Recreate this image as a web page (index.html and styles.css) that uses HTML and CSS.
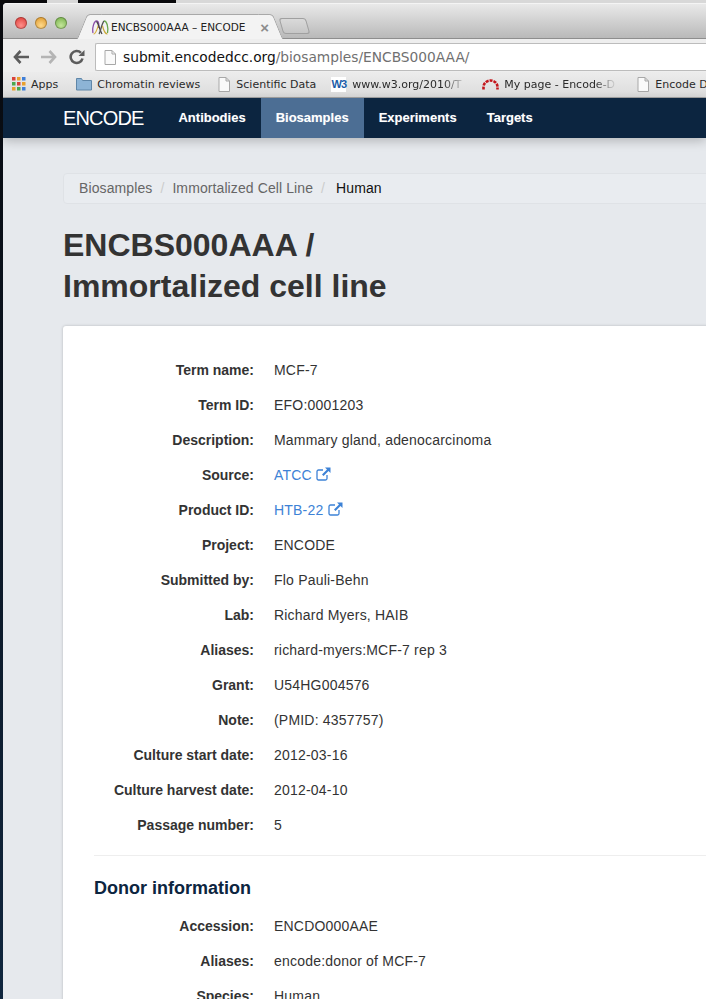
FILE: index.html
```html
<!DOCTYPE html>
<html>
<head>
    <title>ENCBS000AAA – ENCODE</title>
    <link rel="stylesheet" href="styles.css">
</head>
<body>
    <div class="desk-top">
        <span class="desk-dark desk-a"></span>
        <span class="desk-light desk-b"></span>
        <span class="desk-dark desk-c"></span>
        <span class="desk-light desk-d"></span>
    </div>
    <div class="window">
        <div class="tabbar">
            <div class="lights">
                <span class="light light-red"></span>
                <span class="light light-yellow"></span>
                <span class="light light-green"></span>
            </div>
            <div class="tab">
                <svg class="favicon" width="17" height="15" viewBox="0 0 17 15">
                    <path d="M1 13C0 8 2 1 4.500 1S7 5 6.500 8" fill="none" stroke="#8a4fa8" stroke-width="1.300"/>
                    <path d="M1.500 14C4 14 5 9 6.500 5" fill="none" stroke="#d8b040" stroke-width="1.200"/>
                    <path d="M4.500 1.500C6.500 3 8 11 10 14" fill="none" stroke="#444" stroke-width="1.300"/>
                    <path d="M7 14C8.500 12 9.500 4 12 1" fill="none" stroke="#555" stroke-width="1.300"/>
                    <path d="M12 1c3 0 4.500 6 3.500 12" fill="none" stroke="#6aa84e" stroke-width="1.300"/>
                    <path d="M10.500 6c1 4 2.500 8 5 8" fill="none" stroke="#c9a83a" stroke-width="1.200"/>
                </svg>
                <span class="tab-title">ENCBS000AAA – ENCODE</span>
                <span class="tab-close">×</span>
            </div>
            <div class="new-tab"></div>
        </div>
        <div class="toolbar">
            <svg class="nav-icon" width="16" height="16" viewBox="0 0 16 16">
                <path d="M7.500 2L2 8l5.500 6M3 8h13" fill="none" stroke="#5c5c5c" stroke-width="2.600"/>
            </svg>
            <svg class="nav-icon" width="16" height="16" viewBox="0 0 16 16">
                <path d="M8.500 2L14 8l-5.500 6M13 8H0" fill="none" stroke="#b4b4b4" stroke-width="2.600"/>
            </svg>
            <svg class="nav-icon" width="16" height="16" viewBox="0 0 16 16">
                <path d="M13.500 9.500A6 6 0 1 1 12 3.800" fill="none" stroke="#5c5c5c" stroke-width="2.600"/>
                <path d="M9.500 7h6V1z" fill="#5c5c5c"/>
            </svg>
            <div class="omnibox">
                <svg class="doc-icon" width="12" height="15" viewBox="0 0 12 15">
                    <path d="M1 .5h7l3.500 3.500v10.500H1zM8 .5V4h3.500" fill="#fafafa" stroke="#a8a8a8"/>
                </svg>
                <span class="url"><b>submit.encodedcc.org</b>/biosamples/ENCBS000AAA/</span>
            </div>
        </div>
        <div class="bookmarks">
            <span class="bookmark bm-apps">
                <svg width="14" height="14" viewBox="0 0 14 14">
                    <rect x="0" y="0" width="3.500" height="3.500" fill="#d9423a"/>
                    <rect x="5" y="0" width="3.500" height="3.500" fill="#e8a02e"/>
                    <rect x="10" y="0" width="3.500" height="3.500" fill="#3f7fd8"/>
                    <rect x="0" y="5" width="3.500" height="3.500" fill="#4aa84e"/>
                    <rect x="5" y="5" width="3.500" height="3.500" fill="#d9423a"/>
                    <rect x="10" y="5" width="3.500" height="3.500" fill="#e8a02e"/>
                    <rect x="0" y="10" width="3.500" height="3.500" fill="#e8a02e"/>
                    <rect x="5" y="10" width="3.500" height="3.500" fill="#4aa84e"/>
                    <rect x="10" y="10" width="3.500" height="3.500" fill="#3f7fd8"/>
                </svg>
                Apps
            </span>
            <span class="bookmark bm-folder">
                <svg width="16" height="14" viewBox="0 0 16 14">
                    <path d="M.5 13V1.500h5l1 2h9V13z" fill="#8db4d6" stroke="#5f86a8"/>
                </svg>
                Chromatin reviews
            </span>
            <span class="bookmark bm-sci">
                <svg width="12" height="15" viewBox="0 0 12 15">
                    <path d="M1 .5h7l3.500 3.500v10.500H1zM8 .5V4h3.500" fill="#fafafa" stroke="#a8a8a8"/>
                </svg>
                Scientific Data
            </span>
            <span class="bookmark bm-w3">
                <span class="w3-badge">W3</span>
                <span class="fade fade-w3">www.w3.org/2010/T</span>
            </span>
            <span class="bookmark bm-page">
                <svg width="17" height="11" viewBox="0 0 17 11">
                    <path d="M1.500 10.500V8A7 6.500 0 0 1 15.500 8v2.500" fill="none" stroke="#c4161c" stroke-width="2.600" stroke-dasharray="3 1"/>
                </svg>
                <span class="fade fade-page">My page - Encode-D</span>
            </span>
            <span class="bookmark bm-last">
                <svg width="12" height="15" viewBox="0 0 12 15">
                    <path d="M1 .5h7l3.500 3.500v10.500H1zM8 .5V4h3.500" fill="#fafafa" stroke="#a8a8a8"/>
                </svg>
                <span class="last-text">Encode D</span>
            </span>
        </div>
        <nav class="navbar">
            <a class="brand">ENCODE</a>
            <a class="nav-link">Antibodies</a>
            <a class="nav-link active">Biosamples</a>
            <a class="nav-link">Experiments</a>
            <a class="nav-link">Targets</a>
        </nav>
        <div class="content">
            <ol class="breadcrumb">
                <li>Biosamples</li>
                <li class="sep">/</li>
                <li>Immortalized Cell Line</li>
                <li class="sep">/</li>
                <li class="current">Human</li>
            </ol>
            <h1>ENCBS000AAA /<br>Immortalized cell line</h1>
            <div class="panel">
                <dl class="key-value">
                    <dt>Term name:</dt><dd>MCF-7</dd>
                    <dt>Term ID:</dt><dd>EFO:0001203</dd>
                    <dt>Description:</dt><dd>Mammary gland, adenocarcinoma</dd>
                    <dt>Source:</dt>
                    <dd><a class="ext">ATCC
                        <svg width="15" height="14" viewBox="0 0 15 14"><path d="M11 8v3.500a1.500 1.500 0 0 1-1.500 1.500h-7A1.500 1.500 0 0 1 1 11.500v-7A1.500 1.500 0 0 1 2.500 3H7" fill="none" stroke="#3d82d6" stroke-width="1.300"/><path d="M9 .5h5.500V6l-2-2L7.500 9 6 7.500l5-5z" fill="#3d82d6"/></svg>
                    </a></dd>
                    <dt>Product ID:</dt>
                    <dd><a class="ext">HTB-22
                        <svg width="15" height="14" viewBox="0 0 15 14"><path d="M11 8v3.500a1.500 1.500 0 0 1-1.500 1.500h-7A1.500 1.500 0 0 1 1 11.500v-7A1.500 1.500 0 0 1 2.500 3H7" fill="none" stroke="#3d82d6" stroke-width="1.300"/><path d="M9 .5h5.500V6l-2-2L7.500 9 6 7.500l5-5z" fill="#3d82d6"/></svg>
                    </a></dd>
                    <dt>Project:</dt><dd>ENCODE</dd>
                    <dt>Submitted by:</dt><dd>Flo Pauli-Behn</dd>
                    <dt>Lab:</dt><dd>Richard Myers, HAIB</dd>
                    <dt>Aliases:</dt><dd>richard-myers:MCF-7 rep 3</dd>
                    <dt>Grant:</dt><dd>U54HG004576</dd>
                    <dt>Note:</dt><dd>(PMID: 4357757)</dd>
                    <dt>Culture start date:</dt><dd>2012-03-16</dd>
                    <dt>Culture harvest date:</dt><dd>2012-04-10</dd>
                    <dt>Passage number:</dt><dd>5</dd>
                </dl>
                <hr>
                <h3>Donor information</h3>
                <dl class="key-value">
                    <dt>Accession:</dt><dd>ENCDO000AAE</dd>
                    <dt>Aliases:</dt><dd>encode:donor of MCF-7</dd>
                    <dt>Species:</dt><dd>Human</dd>
                </dl>
            </div>
        </div>
    </div>
</body>
</html>
```

FILE: styles.css
```css
html, body {
    height: 999px;
    margin: 0;
    overflow: hidden;
}

body {
    background: linear-gradient(#08090d, #10263e);
    font-family: "Liberation Sans", Arial, sans-serif;
    font-size: 14px;
    color: #333;
}

.desk-top {
    display: flex;
    height: 3px;
}

.desk-dark { background: #0a0a0c; }
.desk-light { background: #d8d8d8; }
.desk-a { width: 47px; }
.desk-b { width: 31px; }
.desk-c { width: 98px; }
.desk-d { flex: 1; }

.window {
    margin-left: 3px;
    background: #e6e9ed;
    height: 996px;
    overflow: hidden;
    border-top-left-radius: 4px;
}

/* browser chrome */
.tabbar {
    display: flex;
    align-items: flex-end;
    height: 36px;
    background: linear-gradient(#e9e9e9, #b9b9b9);
    border-top: 1px solid #f4f4f4;
    border-bottom: 1px solid #8e8e8e;
    box-sizing: border-box;
    padding-left: 12px;
}

.lights {
    display: flex;
    gap: 8px;
    align-self: flex-start;
    margin-top: 13px;
}

.light {
    width: 12px;
    height: 12px;
    border-radius: 50%;
    box-shadow: inset 0 0 0 1px rgba(0, 0, 0, .25);
}

.light-red { background: radial-gradient(circle at 50% 70%, #ff8f8a, #d8302c); }
.light-yellow { background: radial-gradient(circle at 50% 70%, #ffd98a, #d98f1e); }
.light-green { background: radial-gradient(circle at 50% 70%, #c4e69a, #6aa83e); }

.tab {
    position: relative;
    display: flex;
    align-items: center;
    width: 184px;
    height: 25px;
    margin: 0 0 -1px 21px;
    padding: 0 3px 0 4px;
    box-sizing: border-box;
    background: #f3f3f3;
    border-top: 1px solid #a8a8a8;
    border-radius: 4px 4px 0 0;
}

.tab::before,
.tab::after {
    content: "";
    position: absolute;
    top: -1px;
    bottom: 0;
    width: 14px;
    background: #f3f3f3;
    border-top: 1px solid #a8a8a8;
}

.tab::before {
    left: -6px;
    border-left: 1px solid #a0a0a0;
    border-radius: 4px 0 0 0;
    transform: skewX(-22deg);
}

.tab::after {
    right: -6px;
    border-right: 1px solid #a0a0a0;
    border-radius: 0 4px 0 0;
    transform: skewX(22deg);
}

.favicon,
.tab-title,
.tab-close {
    position: relative;
    z-index: 1;
}

.favicon { flex: none; }

.tab-title {
    margin-left: 2px;
    font-family: "DejaVu Sans", sans-serif;
    font-size: 10.500px;
    color: #222;
    white-space: nowrap;
}

.tab-close {
    margin-left: auto;
    font-size: 15px;
    font-weight: bold;
    color: #8c8c8c;
}

.new-tab {
    width: 25px;
    height: 14px;
    margin: 0 0 4px 9px;
    border: 1px solid #a0a0a0;
    border-radius: 3px;
    background: linear-gradient(#dadada, #c6c6c6);
    transform: skewX(16deg);
}

.toolbar {
    display: flex;
    align-items: center;
    height: 33px;
    box-sizing: border-box;
    padding: 3px 0 0 10px;
    gap: 12px;
    background: #eeeeee;
}

.nav-icon { flex: none; }

.omnibox {
    display: flex;
    align-items: center;
    flex: 1;
    height: 26px;
    margin-left: -2px;
    padding-left: 8px;
    gap: 7px;
    background: #fff;
    border: 1px solid #bcbcbc;
    border-right: 0;
    border-radius: 2px 0 0 2px;
}

.url {
    font-family: "DejaVu Sans", sans-serif;
    font-size: 13.750px;
    color: #707070;
    white-space: nowrap;
}

.url b {
    font-weight: normal;
    color: #111;
}

.bookmarks {
    display: flex;
    align-items: center;
    height: 26px;
    padding: 0 0 1px 9px;
    background: linear-gradient(#ececec, #dcdcdc);
    border-bottom: 1px solid #a4a4a4;
    font-family: "DejaVu Sans", sans-serif;
    font-size: 11px;
    color: #2a2a2a;
    white-space: nowrap;
    box-sizing: border-box;
}

.bookmark {
    display: flex;
    align-items: center;
    gap: 5px;
    flex: none;
}

.bm-folder { margin-left: 18px; }
.bm-sci { margin-left: 18px; gap: 6px; }
.bm-w3 { margin-left: 15px; gap: 6px; }
.bm-page { margin-left: 16px; }
.bm-last { margin-left: 20px; gap: 6px; }

.w3-badge {
    width: 15px;
    height: 15px;
    background: #fff;
    color: #1a5ca8;
    font-family: "Liberation Sans", sans-serif;
    font-size: 11px;
    font-weight: bold;
    text-align: center;
    line-height: 15px;
    letter-spacing: -1px;
}

.fade {
    display: inline-block;
    overflow: hidden;
    -webkit-mask-image: linear-gradient(90deg, #000 80%, transparent);
    mask-image: linear-gradient(90deg, #000 80%, transparent);
}

.fade-w3 { width: 114px; }
.fade-page { width: 113px; }

/* site nav */
.navbar {
    display: flex;
    align-items: stretch;
    height: 40px;
    padding-left: 60px;
    background: #0c2540;
    box-shadow: 0 3px 10px rgba(0, 0, 0, .22);
    color: #fff;
    position: relative;
}

.brand {
    font-size: 20px;
    letter-spacing: -.85px;
    line-height: 40px;
    padding-right: 20px;
}

.nav-link {
    padding: 0 15px;
    font-size: 13px;
    font-weight: bold;
    line-height: 40px;
    text-shadow: 0 0 1px rgba(255, 255, 255, .35);
}

.nav-link.active {
    background: #4c6e94;
}

/* page */
.content {
    padding: 35px 0 0 60px;
}

.breadcrumb {
    display: flex;
    align-items: center;
    gap: 8px;
    list-style: none;
    margin: 0 -20px 0 0;
    padding: 0 15px 2px;
    height: 31px;
    box-sizing: border-box;
    background: #e9ecf0;
    border: 1px solid #dfe2e6;
    border-radius: 4px;
    color: #666;
    letter-spacing: .1px;
}

.breadcrumb .sep { color: #ccc; }
.breadcrumb .current { color: #111; margin-left: 3px; }

h1 {
    margin: 21px 0 0;
    font-size: 32px;
    line-height: 41px;
    font-weight: bold;
    color: #333;
}

.panel {
    margin: 19px -20px 0 0;
    padding: 34px 0 0 31px;
    background: #fff;
    border-radius: 3px 0 0 0;
    box-shadow: 0 0 3px rgba(0, 0, 0, .22);
}

.key-value {
    display: grid;
    grid-template-columns: 160px 1fr;
    column-gap: 20px;
    row-gap: 15px;
    margin: 0;
    line-height: 20px;
}

dt {
    text-align: right;
    font-weight: bold;
}

dd {
    margin: 0;
    letter-spacing: .2px;
}

.ext { color: #3d82d6; }
.ext svg { vertical-align: -1px; }

hr {
    margin: 20px 0 0;
    border: 0;
    border-top: 1px solid #eee;
}

h3 {
    margin: 21px 0 17px;
    font-size: 18px;
    line-height: 22px;
    color: #0c2540;
}
```
